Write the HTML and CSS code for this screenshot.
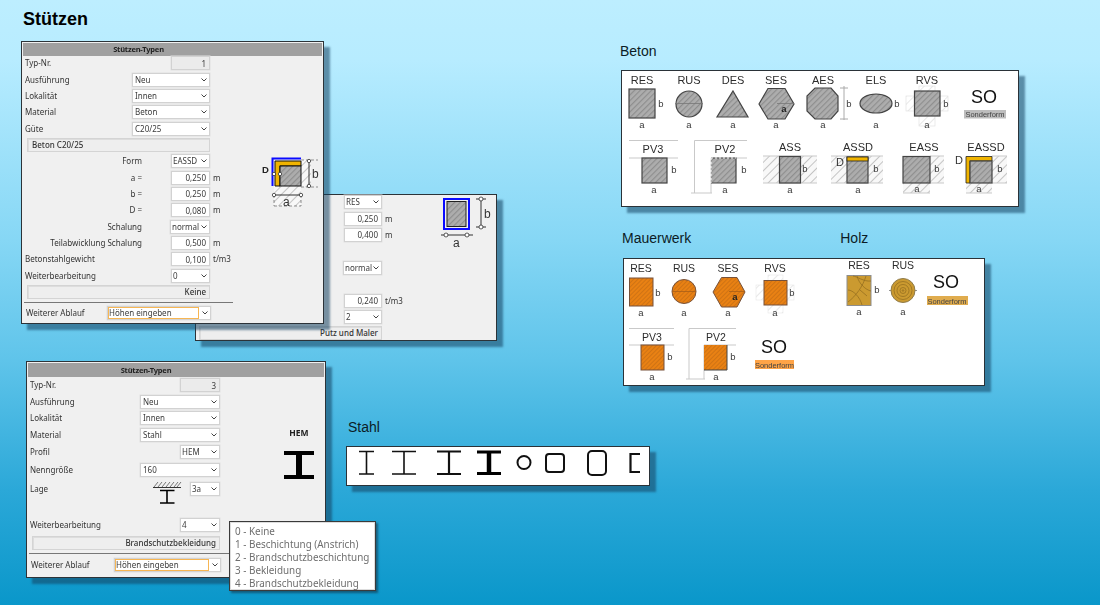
FILE: index.html
```html
<!DOCTYPE html>
<html lang="de">
<head>
<meta charset="utf-8">
<title>Stützen</title>
<link rel="stylesheet" href="styles.css">
</head>
<body>
<svg class="defs" width="0" height="0" aria-hidden="true">
  <defs>
    <pattern id="hg" width="4" height="4" patternUnits="userSpaceOnUse" patternTransform="rotate(45)"><rect width="4" height="4" fill="#adadad"/><rect width="1.2" height="4" fill="#8e8e8e"/></pattern>
    <pattern id="hl" width="6" height="6" patternUnits="userSpaceOnUse" patternTransform="rotate(45)"><rect width="6" height="6" fill="#f8f8f8"/><rect width="1" height="6" fill="#c4c4c4"/></pattern>
    <pattern id="hf" width="6" height="6" patternUnits="userSpaceOnUse" patternTransform="rotate(45)"><rect width="6" height="6" fill="#fff"/><rect width="1" height="6" fill="#e8e8e8"/></pattern>
    <pattern id="ho" width="3" height="3" patternUnits="userSpaceOnUse" patternTransform="rotate(45)"><rect width="3" height="3" fill="#e98113"/><rect width="1" height="3" fill="#cf7314"/></pattern>
  </defs>
</svg>
<main class="desktop">
  <h1 class="title">Stützen</h1>

  <section class="win win2">
    <div class="form f2">
      <select class="c3"><option>RES</option></select><span></span>
      <input class="c3" value="0,250"><span class="unit">m</span>
      <input class="c3" value="0,400"><span class="unit">m</span>
      <span class="blank"></span>
      <select class="c3 wide"><option>normal</option></select>
      <span class="blank"></span>
      <input class="c3" value="0,240"><span class="unit">t/m3</span>
      <select class="c3"><option>2</option></select><span></span>
      <div class="bar c3full">Putz und Maler</div>
    </div>
    <svg class="prev prev2" viewBox="440 194 55 56" width="55" height="56">
      <rect x="444" y="199" width="25" height="30" fill="none" stroke="#0a0aff" stroke-width="2"/>
      <rect x="447" y="201.500" width="19" height="25" fill="url(#hg)" stroke="#222"/>
      <path class="ln" d="M481 199V227M476 199H486M476 227H486M441 235H473"/>
      <circle class="ring" cx="481" cy="199" r="2"/><circle class="ring" cx="481" cy="227" r="2"/>
      <circle class="ring" cx="446" cy="235" r="2"/><circle class="ring" cx="467" cy="235" r="2"/>
      <text class="pv" x="484" y="218">b</text><text class="pv" x="453" y="247">a</text>
    </svg>
  </section>

  <section class="win win1">
    <header class="win-title">Stützen-Typen</header>
    <div class="form f1">
      <label class="l1">Typ-Nr.</label><input class="c3 ro" value="1" readonly><span></span>
      <label class="l1">Ausführung</label><select class="c23"><option>Neu</option></select><span></span>
      <label class="l1">Lokalität</label><select class="c23"><option>Innen</option></select><span></span>
      <label class="l1">Material</label><select class="c23"><option>Beton</option></select><span></span>
      <label class="l1">Güte</label><select class="c23"><option>C20/25</option></select><span></span>
      <div class="bar left c123">Beton C20/25</div><span></span>
      <label class="lr">Form</label><select class="c3"><option>EASSD</option></select><span></span>
      <label class="lr">a =</label><input class="c3" value="0,250"><span class="unit">m</span>
      <label class="lr">b =</label><input class="c3" value="0,250"><span class="unit">m</span>
      <label class="lr">D =</label><input class="c3" value="0,080"><span class="unit">m</span>
      <label class="lr">Schalung</label><select class="c3 wide"><option>normal</option></select><span></span>
      <label class="lr">Teilabwicklung Schalung</label><input class="c3" value="0,500"><span class="unit">m</span>
      <label class="l1">Betonstahlgewicht</label><input class="c3" value="0,100"><span class="unit">t/m3</span>
      <label class="l1">Weiterbearbeitung</label><select class="c3"><option>0</option></select><span></span>
      <div class="bar c123">Keine</div><span></span>
    </div>
    <div class="flow flow1">
      <label>Weiterer Ablauf</label>
      <div class="flowsel"><select><option>Höhen eingeben</option></select></div>
    </div>
    <svg class="prev prev1" viewBox="260 150 65 62" width="65" height="62">
      <rect x="274" y="186" width="27" height="20" fill="url(#hl)"/>
      <rect x="301" y="160" width="10" height="27" fill="url(#hl)"/>
      <path class="dash" d="M274 206H301M274 195V206M301 195V206M301 160H318M301 187H318"/>
      <path d="M272.500 186V158.500H301" fill="none" stroke="#0a0aff" stroke-width="2"/>
      <path d="M275 186V161H301V166H280V186Z" fill="#f0b400" stroke="#111"/>
      <rect x="280" y="166" width="21" height="20" fill="url(#hg)" stroke="#111"/>
      <path class="ln" d="M274 195H302M309 160V187"/>
      <circle class="ring" cx="309" cy="161" r="1.700"/><circle class="ring" cx="309" cy="186" r="1.700"/>
      <circle class="ring" cx="274" cy="174" r="1.700"/><circle class="ring" cx="280" cy="174" r="1.700"/>
      <circle class="ring" cx="274" cy="195" r="1.700"/><circle class="ring" cx="301" cy="195" r="1.700"/>
      <text class="pvb" x="262" y="173">D</text><text class="pv" x="312" y="178">b</text><text class="pv" x="283" y="206">a</text>
    </svg>
  </section>

  <section class="win win3">
    <header class="win-title">Stützen-Typen</header>
    <div class="form f3">
      <label class="l1">Typ-Nr.</label><input class="c3 ro" value="3" readonly><span></span>
      <label class="l1">Ausführung</label><select class="c23"><option>Neu</option></select><span></span>
      <label class="l1">Lokalität</label><select class="c23"><option>Innen</option></select><span></span>
      <label class="l1">Material</label><select class="c23"><option>Stahl</option></select><span></span>
      <label class="l1">Profil</label><select class="c3"><option>HEM</option></select><span></span>
      <label class="l1">Nenngröße</label><select class="c23"><option>160</option></select><span></span>
      <label class="l1">Lage</label><select class="c3 sm"><option>3a</option></select><span></span>
      <span class="blank"></span>
      <label class="l1">Weiterbearbeitung</label><select class="c3"><option>4</option></select><span></span>
      <div class="bar c123">Brandschutzbekleidung</div><span></span>
    </div>
    <div class="flow flow3">
      <label>Weiterer Ablauf</label>
      <div class="flowsel"><select><option>Höhen eingeben</option></select></div>
    </div>
    <svg class="prev prev3a" viewBox="150 480 34 26" width="34" height="26">
      <path d="M153 487.500H181" stroke="#333" stroke-width="1"/>
      <path d="M154 487l4-5M158 487l4-5M162 487l4-5M166 487l4-5M170 487l4-5M174 487l4-5M177 487l4-5" stroke="#555" stroke-width=".8"/>
      <path d="M160 490.500H174.500M167 490V503M160 503H174.500" stroke="#000" stroke-width="1.600" fill="none"/>
    </svg>
    <div class="hem">
      <strong>HEM</strong>
      <svg viewBox="283 449 32 30" width="32" height="30">
        <path d="M284 452H314M284 476H314" stroke="#000" stroke-width="4"/>
        <path d="M299 452V476" stroke="#000" stroke-width="6"/>
      </svg>
    </div>
  </section>

  <ul class="popup">
    <li>0 - Keine</li>
    <li>1 - Beschichtung (Anstrich)</li>
    <li>2 - Brandschutzbeschichtung</li>
    <li>3 - Bekleidung</li>
    <li>4 - Brandschutzbekleidung</li>
  </ul>

  <section class="group g-stahl">
    <h2>Stahl</h2>
    <div class="sheet">
      <svg viewBox="347 447 302 38" width="302" height="38">
        <g fill="none" stroke="#111">
          <path stroke-width="1.600" d="M359 451.500H374M359 474H374M366.500 451.500V474"/>
          <path stroke-width="1.600" d="M392 451.500H416M392 474H416M404 451.500V474"/>
          <path stroke-width="2" d="M437 451.500H461M437 474H461"/><path stroke-width="2.200" d="M449 451.500V474"/>
          <path stroke-width="3" d="M477 452H501M477 473.500H501" stroke="#000"/><path stroke-width="4.500" stroke="#000" d="M489 452V473"/>
          <circle stroke-width="2" cx="524" cy="462.500" r="6.500"/>
          <rect stroke-width="2" x="546" y="454" width="18" height="18" rx="3"/>
          <rect stroke-width="2" x="588" y="451" width="18" height="24" rx="4"/>
          <path stroke-width="2.200" d="M640 454H630.500V472H640"/>
        </g>
      </svg>
    </div>
  </section>

  <section class="group g-beton">
    <h2>Beton</h2>
    <div class="sheet">
      <svg class="cat" viewBox="622 71 396 135" width="396" height="135">
        <text class="cap" x="642" y="83.500">RES</text>
        <rect class="s" x="629" y="89" width="26" height="29" fill="url(#hg)"/>
        <text class="dim" x="661" y="107">b</text><text class="dim" x="642" y="128">a</text>

        <text class="cap" x="689" y="83.500">RUS</text>
        <circle class="s" cx="689" cy="104" r="13" fill="url(#hg)"/><path class="thin" d="M675 103.500H703"/>
        <text class="dim" x="689" y="128">a</text>

        <text class="cap" x="733" y="83.500">DES</text>
        <path class="s" d="M733 91L748 117H717Z" fill="url(#hg)"/>
        <text class="dim" x="733" y="128">a</text>

        <text class="cap" x="776" y="83.500">SES</text>
        <path class="s" d="M759 104L768 88.500H785L794 104L785 119H768Z" fill="url(#hg)"/><path class="thin" d="M777 103.500H794"/>
        <text class="dimb" x="784" y="112">a</text><text class="dim" x="776" y="128">a</text>

        <text class="cap" x="823" y="83.500">AES</text>
        <path class="s" d="M815 88H831L838 96V111L831 119H815L807 111V96L815 88Z" fill="url(#hg)"/>
        <path class="gr" d="M844 86V120M840 88H848M840 119H848"/>
        <text class="dim" x="849" y="107">b</text><text class="dim" x="823" y="128">a</text>

        <text class="cap" x="876" y="83.500">ELS</text>
        <ellipse class="s" cx="876" cy="103.500" rx="16" ry="9.500" fill="url(#hg)"/>
        <text class="dim" x="897" y="107">b</text><text class="dim" x="876" y="128">a</text>

        <text class="cap" x="927" y="83.500">RVS</text>
        <rect x="906" y="96" width="42" height="15" fill="url(#hf)" stroke="#ddd" stroke-width=".6"/>
        <rect x="919" y="86" width="16" height="40" fill="url(#hf)" stroke="#ddd" stroke-width=".6"/>
        <rect class="s" x="914.500" y="91" width="25.500" height="25" fill="url(#hg)"/>
        <text class="dim" x="946" y="107">b</text><text class="dim" x="927" y="128">a</text>

        <text class="so" x="984" y="103">SO</text>
        <rect x="964" y="110" width="42" height="8.500" fill="#bdbdbd"/>
        <text class="sf" x="985" y="117">Sonderform</text>

        <rect x="629" y="140.500" width="49" height="17.500" fill="#fff"/><path class="lg" d="M629 140.500H678M629 158H678"/>
        <text class="cap" x="653" y="153">PV3</text>
        <rect class="s" x="642" y="158" width="25" height="25" fill="url(#hg)"/>
        <text class="dim" x="674" y="173">b</text><text class="dim" x="654" y="193">a</text>

        <path class="lg" d="M691 193H712M694.500 193V140.500H747M747 158H711V193"/>
        <text class="cap" x="725" y="153">PV2</text>
        <rect x="711" y="158" width="25" height="25" fill="url(#hg)"/><path class="s nf" d="M711 158H736V183H711"/><path class="dashk" d="M711 158V183M711 158H736"/>
        <text class="dim" x="744" y="173">b</text><text class="dim" x="725" y="193">a</text>

        <text class="cap" x="790" y="151">ASS</text>
        <rect x="763" y="156" width="54" height="27" fill="url(#hl)"/><path class="lg" d="M763 156H817M763 183H817"/>
        <rect class="s" x="779.500" y="156.500" width="21" height="26.500" fill="url(#hg)"/>
        <text class="dim" x="805" y="172">b</text><text class="dim" x="790" y="193">a</text>

        <text class="cap" x="858" y="151">ASSD</text>
        <rect x="831" y="156" width="52" height="27" fill="url(#hl)"/><path class="lg" d="M831 156H883M831 183H883"/>
        <rect class="s" x="847" y="157" width="21" height="26" fill="url(#hg)"/>
        <rect x="847" y="157" width="21" height="4" fill="#f0b400" stroke="#222" stroke-width=".8"/>
        <text class="dimd" x="840" y="166">D</text><text class="dim" x="876" y="172">b</text><text class="dim" x="858" y="193">a</text>

        <text class="cap" x="924" y="151">EASS</text>
        <rect x="930" y="156" width="14" height="27" fill="url(#hl)"/><rect x="903" y="183" width="27" height="10" fill="url(#hl)"/>
        <path class="lg" d="M930 156H944M930 183H944M903 193H930"/>
        <rect class="s" x="903" y="156.500" width="27" height="26.500" fill="url(#hg)"/>
        <text class="dim" x="937" y="172">b</text><text class="dim" x="917" y="192">a</text>

        <text class="cap" x="986" y="151">EASSD</text>
        <rect x="992" y="156" width="15" height="27" fill="url(#hl)"/><rect x="966" y="183" width="26" height="10" fill="url(#hl)"/>
        <path class="lg" d="M992 156H1007M992 183H1007M966 193H992"/>
        <path d="M966 183V156.500H992V161H970V183Z" fill="#f0b400" stroke="#222" stroke-width=".8"/>
        <rect class="s" x="970" y="161" width="22" height="22" fill="url(#hg)"/>
        <text class="dimd" x="959" y="164">D</text><text class="dim" x="1000" y="172">b</text><text class="dim" x="979" y="192">a</text>
      </svg>
    </div>
  </section>

  <section class="group g-mauer">
    <div class="caps"><h2>Mauerwerk</h2><h2>Holz</h2></div>
    <div class="sheet">
      <svg class="cat" viewBox="624 259 360 126" width="360" height="126">
        <text class="cap2" x="641" y="272">RES</text>
        <rect class="so-s" x="629.500" y="278" width="23.500" height="28" fill="url(#ho)"/>
        <text class="dim" x="658" y="296">b</text><text class="dim" x="641" y="316">a</text>

        <text class="cap2" x="684" y="272">RUS</text>
        <circle class="so-s" cx="684" cy="291.500" r="12" fill="url(#ho)"/><path class="thino" d="M672 291.500H696"/>
        <text class="dim" x="684" y="316">a</text>

        <text class="cap2" x="728" y="272">SES</text>
        <path class="so-s" d="M713 292L721.500 277.500H737L745 292L737 307H721.500Z" fill="url(#ho)"/><path class="thino" d="M729 291.500H745"/>
        <text class="dimb" x="735" y="300">a</text><text class="dim" x="728" y="316">a</text>

        <text class="cap2" x="775" y="272">RVS</text>
        <rect x="756" y="285" width="38" height="15" fill="url(#hf)" stroke="#e6e6e6" stroke-width=".6"/>
        <rect x="768" y="275" width="15" height="38" fill="url(#hf)" stroke="#e6e6e6" stroke-width=".6"/>
        <rect class="so-s" x="764" y="280.500" width="23" height="24.500" fill="url(#ho)"/>
        <text class="dim" x="792" y="296">b</text><text class="dim" x="775" y="316">a</text>

        <path class="lg" d="M629 328.500H674M629 345H674"/>
        <text class="cap2" x="652" y="341">PV3</text>
        <rect class="so-s" x="641" y="345" width="23" height="25" fill="url(#ho)"/>
        <text class="dim" x="670" y="360">b</text><text class="dim" x="652" y="380">a</text>

        <path class="lg" d="M686 379H705M689 379V328.500H736M736 345H704V379"/>
        <text class="cap2" x="716" y="341">PV2</text>
        <rect x="704" y="345" width="23" height="25" fill="url(#ho)"/><path class="s nf thins" d="M704 370H727V345"/>
        <text class="dim" x="733" y="360">b</text><text class="dim" x="716" y="380">a</text>

        <text class="so" x="774" y="353">SO</text>
        <rect x="755" y="360" width="39" height="9" fill="#ffa447"/>
        <text class="sf" x="774.500" y="367.500">Sonderform</text>

        <text class="cap2" x="859" y="269">RES</text>
        <rect x="847" y="275.500" width="24" height="30" fill="#cb9a30" stroke="#8d8d8d"/>
        <path class="grain" d="M857 276C859 284 866 290 871 291M866 276C863 286 856 296 848 302M848 290C853 290 860 297 862 305M871 281C864 282 856 276 853 276M860 290L867 296"/>
        <text class="dim" x="877" y="293">b</text><text class="dim" x="859" y="315">a</text>

        <text class="cap2" x="903" y="269">RUS</text>
        <path class="thin" d="M889 290.500H917"/>
        <circle cx="903" cy="290.500" r="12" fill="#cb9a30" stroke="#8d7a4a"/>
        <g class="grain"><circle cx="903" cy="290.500" r="9"/><circle cx="903" cy="290.500" r="6"/><circle cx="903" cy="290.500" r="3"/><circle cx="903" cy="290.500" r=".8"/></g>
        <text class="dim" x="903" y="315">a</text>

        <text class="so" x="946" y="288">SO</text>
        <rect x="927" y="296" width="41" height="9" fill="#e0ac4e"/>
        <text class="sf" x="947" y="304">Sonderform</text>
      </svg>
    </div>
  </section>
</main>
</body>
</html>
```

FILE: styles.css
```css
* { box-sizing: border-box; }
html, body { margin: 0; padding: 0; }
.defs { position: absolute; }
.desktop {
  position: relative;
  width: 1100px;
  height: 605px;
  overflow: hidden;
  padding: 9px 23px;
  background: linear-gradient(180deg, #bdeeff 0, #b7ecff 60px, #86d7f5 240px, #5fc4ea 360px, #2ba8d8 490px, #0a97ca 605px);
  font-family: "Liberation Sans", Arial, sans-serif;
}
.title { margin: 0; font-size: 18px; line-height: 20px; font-weight: 700; color: #000; }

.win {
  position: absolute;
  background: #f0f0f0;
  border: 1px solid #2c3338;
  box-shadow: 6px 6px 2px rgba(20, 66, 96, .55);
  font: 8px/12px "Noto Sans", "Open Sans", sans-serif;
  color: #333;
  padding: 1px 1px 0;
  filter: blur(.25px);
}
.win1 { left: 21px; top: 41px; width: 303px; height: 283px; }
.win2 { left: 195px; top: 194px; width: 302px; height: 147px; }
.win3 { left: 26px; top: 361px; width: 300px; height: 217px; }
.win-title {
  height: 13px;
  background: #a0a0a0;
  text-align: center;
  font-weight: 700;
  font-size: 7.500px;
  letter-spacing: -.2px;
  color: #222;
  line-height: 13px;
}
.win1 .win-title { padding-right: 68px; }
.win3 .win-title { height: 14px; padding-right: 60px; line-height: 14px; }
.form { display: grid; align-items: center; }
.f1 {
  margin-top: -1px;
  padding-left: 2px;
  grid-template-columns: 107px 39px 39px 1fr;
  grid-auto-rows: 16.350px;
}
.f2 {
  margin-top: -2px;
  padding-left: 147px;
  grid-template-columns: 38px 1fr;
  grid-auto-rows: 16.400px;
}
.f3 {
  padding-left: 2px;
  grid-template-columns: 110px 40px 40px 1fr;
  grid-template-rows: 16px 17px 16px 18px 15.500px 20.500px 17px 19.300px 18px 16.800px;
}
.f2 .c3 { grid-column: 1; }
.f2 .bar.c3full { grid-column: 1 / 2; margin-left: -145px; }
.f2 .blank { grid-column: 1 / -1; }
.f3 .blank { grid-column: 1 / -1; }
.l1 { grid-column: 1; white-space: nowrap; }
.lr { grid-column: 1 / 3; text-align: right; padding-right: 29px; white-space: nowrap; }
.c3 { grid-column: 3; }
.c23 { grid-column: 2 / 4; }
.c123 { grid-column: 1 / 4; margin-left: 2px; }
.f3 .sm { margin-left: 10px; width: 30px; }
.unit { padding-left: 3px; white-space: nowrap; }
.form input, .form select, .flowsel select {
  font: inherit;
  color: #3a3a3a;
  background-color: #fff;
  border: 1px solid #d2d2d2;
  box-shadow: 0 0 0 .5px #e0e0e0;
  border-radius: 0;
  height: 14px;
  width: 100%;
  margin: 0;
  outline: 0;
}
.form select, .flowsel select {
  appearance: none;
  -webkit-appearance: none;
  padding: 0 0 0 1px;
  background-image: url("data:image/svg+xml,%3Csvg xmlns='http://www.w3.org/2000/svg' width='6' height='4'%3E%3Cpath d='M.5.5L3 3 5.500.5' fill='none' stroke='%23444' stroke-width='1'/%3E%3C/svg%3E");
  background-repeat: no-repeat;
  background-position: right 2px center;
}
.form select.c23 { padding-left: 2px; }
.form select.wide { margin-left: -1px; width: calc(100% + 1px); }
.form input { text-align: right; padding: 0 3px 0 0; }
.form input.ro { background: #ebebeb; }
.bar {
  height: 14px;
  line-height: 12px;
  background: #eee;
  border: 1px solid #d4d4d4;
  box-shadow: inset 1px 1px 0 #ddd;
  text-align: right;
  padding: 0 3px;
  font-weight: 500;
  white-space: nowrap;
}
.bar.left { text-align: left; padding-left: 4px; }

.flow { display: flex; align-items: center; border-top: 1px solid #777; }
.flow1 { margin: 2px 0 0 1px; width: 209px; padding-left: 2px; height: 21px; }
.flow3 { margin: 1.600px 0 0 1px; padding-left: 2px; width: 296px; height: 23px; }
.flow label { width: 81px; white-space: nowrap; }
.flow3 label { width: 83px; }
.flowsel { position: relative; }
.flow1 .flowsel { width: 104px; }
.flow3 .flowsel { width: 107px; }
.flowsel::after {
  content: "";
  position: absolute;
  left: 1px; top: 1px; bottom: 1px; right: 12px;
  border: 1px solid #f7b653;
  pointer-events: none;
}
.prev { position: absolute; }
.prev1 { left: 238px; top: 108px; }
.prev2 { left: 244px; top: -1px; }
.prev3a { left: 123px; top: 118px; }
.hem { position: absolute; left: 256px; top: 66px; display: flex; flex-direction: column; align-items: center; gap: 12px; }
.hem strong { font-size: 8.500px; line-height: 10px; color: #222; }
.ln { fill: none; stroke: #333; stroke-width: 1; }
.ring { fill: #fff; stroke: #333; stroke-width: .8; }
.dash { fill: none; stroke: #666; stroke-width: .7; stroke-dasharray: 3 2; }
.pv { font: 12px "Liberation Sans", sans-serif; fill: #333; }
.pvb { font: 700 9.500px "Liberation Sans", sans-serif; fill: #222; }

.popup {
  position: absolute;
  left: 229px;
  top: 521px;
  width: 147px;
  height: 70px;
  margin: 0;
  padding: 3px 0 0 5px;
  list-style: none;
  background: #fff;
  border: 1px solid #3a3a3a;
  box-shadow: 2px 2px 2px rgba(20, 50, 70, .6), inset 0 0 0 1px #ddd;
  font: 9.900px/13px "Noto Sans", "Open Sans", sans-serif;
  color: #6e6e6e;
  white-space: nowrap;
  filter: blur(.2px);
}

.group { position: absolute; }
.group h2 { margin: 0; font-size: 14px; line-height: 16px; font-weight: 400; color: #0c1c26; }
.sheet {
  background: #fff;
  border: 1px solid #2a3238;
  box-shadow: 6px 6px 2px rgba(20, 66, 96, .55);
  line-height: 0;
}
.sheet svg { display: block; filter: blur(.3px); }
.g-beton { left: 621px; top: 43px; }
.g-beton h2 { margin: 0 0 11px -1px; }
.g-mauer { left: 623px; top: 230px; }
.caps { display: flex; gap: 150px; margin-bottom: 12px; }
.caps h2 { margin-left: -1px; }
.g-stahl { left: 346px; top: 419px; }
.g-stahl h2 { margin: 0 0 11px 2px; }

.cap, .cap2 { font-size: 11px; text-anchor: middle; fill: #2c2c2c; }
.cap2 { font-size: 10.500px; }
.dim { font-size: 9.500px; text-anchor: middle; fill: #3a3a3a; }
.dimd { font-size: 11px; text-anchor: middle; fill: #333; }
.dimb { font-size: 9.500px; text-anchor: middle; fill: #222; font-weight: 700; }
.so { font-size: 18px; text-anchor: middle; fill: #111; }
.sf { font-size: 7.500px; text-anchor: middle; fill: #444; }
.s { stroke: #444; stroke-width: 1.200; }
.so-s { stroke: #76513a; stroke-width: 1; }
.nf { fill: none; }
.thins { stroke-width: 1; }
.thin { fill: none; stroke: #777; stroke-width: .8; }
.thino { fill: none; stroke: #a85e18; stroke-width: .8; }
.gr { fill: none; stroke: #aaa; stroke-width: 1; }
.lg { fill: none; stroke: #c9c9c9; stroke-width: 1; }
.dashk { fill: none; stroke: #fff; stroke-width: 1; stroke-dasharray: 2 2; }
.grain, .grain circle { fill: none; stroke: #8f6a1e; stroke-width: .7; }
```
